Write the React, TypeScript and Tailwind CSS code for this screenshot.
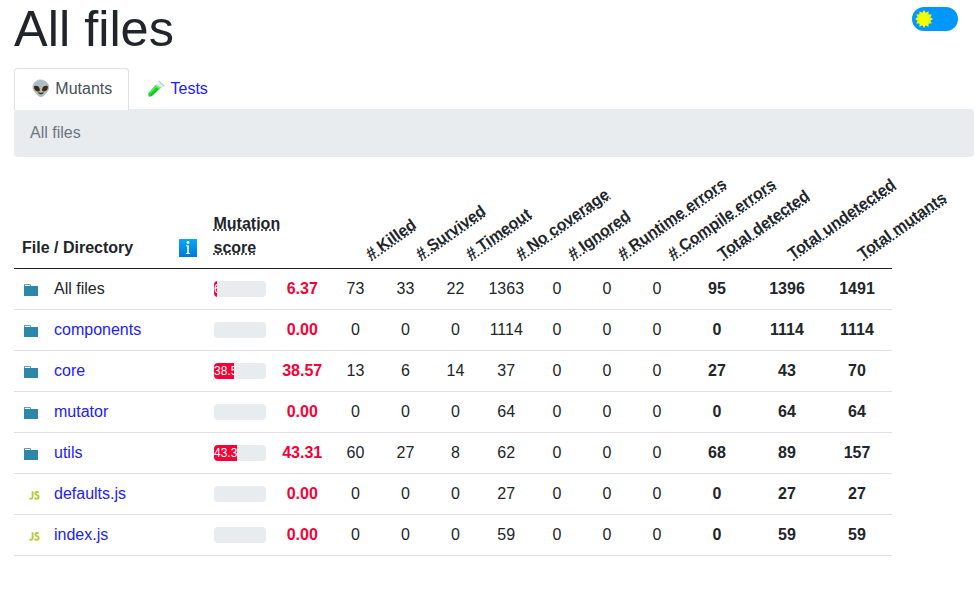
import React from "react";

type Row = { name: string; kind: "root" | "dir" | "js"; score: number; counts: number[]; totals: number[] };

const counts = ["# Killed", "# Survived", "# Timeout", "# No coverage", "# Ignored", "# Runtime errors", "# Compile errors"];
const totals = ["Total detected", "Total undetected", "Total mutants"];

const rows: Row[] = [
  { name: "All files", kind: "root", score: 6.37, counts: [73, 33, 22, 1363, 0, 0, 0], totals: [95, 1396, 1491] },
  { name: "components", kind: "dir", score: 0, counts: [0, 0, 0, 1114, 0, 0, 0], totals: [0, 1114, 1114] },
  { name: "core", kind: "dir", score: 38.57, counts: [13, 6, 14, 37, 0, 0, 0], totals: [27, 43, 70] },
  { name: "mutator", kind: "dir", score: 0, counts: [0, 0, 0, 64, 0, 0, 0], totals: [0, 64, 64] },
  { name: "utils", kind: "dir", score: 43.31, counts: [60, 27, 8, 62, 0, 0, 0], totals: [68, 89, 157] },
  { name: "defaults.js", kind: "js", score: 0, counts: [0, 0, 0, 27, 0, 0, 0], totals: [0, 27, 27] },
  { name: "index.js", kind: "js", score: 0, counts: [0, 0, 0, 59, 0, 0, 0], totals: [0, 59, 59] },
];

const columns = "grid grid-cols-[192px_68px_56.5px_50px_50px_50px_51.5px_50px_50px_50px_70px_70px_70px] w-[878px]";
const dotted = "underline decoration-dotted";

function FolderIcon() {
  return (
    <svg className="ml-[10px] mt-[2px] h-3 w-[14px] shrink-0" viewBox="0 0 14 12">
      <path fill="#2c87a8" fillRule="evenodd" d="M0 .2h6.8V2H14v10H0zM.8 1v1h5.2V1z" />
    </svg>
  );
}

function JsIcon() {
  return (
    <svg className="ml-[15px] mt-[2px] h-[9px] w-[11px] shrink-0" viewBox="0 0 11 9" fill="none" stroke="#b7cc3c" strokeWidth="1.9">
      <path d="M3.6 .3V6.2Q3.6 7.7 2.1 7.7Q1.2 7.7 .4 7.2M9.8 1.5Q9 1 8 1Q6.3 1 6.3 2.4Q6.3 3.5 8 4.1Q9.7 4.7 9.7 6Q9.7 7.7 7.7 7.7Q6.4 7.7 5.5 7.1" />
    </svg>
  );
}

function InfoIcon() {
  return (
    <svg className="mb-[3px] h-[18px] w-[18px]" viewBox="0 0 18 18">
      <defs>
        <linearGradient id="info" x1="0" y1="0" x2="0" y2="1">
          <stop offset="0" stopColor="#03a7fa" />
          <stop offset="1" stopColor="#0479d6" />
        </linearGradient>
      </defs>
      <rect width="18" height="18" rx=".5" fill="url(#info)" />
      <circle cx="9" cy="3.5" r="1.4" fill="#fff" />
      <path d="M7 6.3H9.8V14H11V14.9H7V14H8.2V7.2H7z" fill="#fff" />
    </svg>
  );
}

function TubeIcon() {
  return (
    <svg className="h-[18px] w-[18px]" viewBox="0 0 18 18">
      <path d="M11.5 2L16 6.5L5.6 15.8Q3.6 17.6 1.6 16.3Q.1 14.5 2 12.3z" fill="#dde9ea" />
      <path d="M8.4 5.2L13.8 7.6L5.2 15.8Q3.4 17.2 1.6 16.2Q.4 14.5 2.2 12.2z" fill="#17d929" />
      <path d="M9.2 5.1L13.8 7.6L11.8 8.7Q9.3 7.6 8.4 6z" fill="#76ee61" />
      <path d="M3 12.7L8.5 7" stroke="#92f47c" strokeWidth="1" strokeLinecap="round" />
      <path d="M3.4 15.9L11 8.9" stroke="#0aae25" strokeWidth="1" />
      <path d="M12 1.2L16.8 5.7" stroke="#b4ced2" strokeWidth="1.3" strokeLinecap="round" />
      <path d="M10.8 4.3L12.2 2.9" stroke="#fff" strokeWidth="1" />
    </svg>
  );
}

function Rotated({ label }: { label: string }) {
  return (
    <div className="pb-[9.5px] pl-[7.5px]">
      <div className="w-[30px] translate-x-[27px] rotate-[-35deg] whitespace-nowrap">
        <span className={dotted}>{label}</span>
      </div>
    </div>
  );
}

const sun = Array.from({ length: 24 }, (_, i) => {
  const r = i % 2 ? 6.5 : 9;
  const a = (i * Math.PI) / 12;
  return `${(9 + r * Math.sin(a)).toFixed(2)},${(9 - r * Math.cos(a)).toFixed(2)}`;
}).join(" ");

export default function App() {
  return (
    <div className="h-[594px] overflow-hidden bg-white pl-[14px] font-['Liberation_Sans','Noto_Color_Emoji',sans-serif] text-base leading-6 text-[#212529]">
      <header className="flex h-[68px] justify-between pr-[19px]">
        <h1 className="-mt-[1px] text-[50.5px] leading-[60px]">All files</h1>
        <div className="mt-[7px] flex h-6 w-[46px] items-center rounded-full bg-[#0098ff] pl-[2.5px]">
          <svg className="h-[18px] w-[18px]" viewBox="0 0 18 18">
            <polygon points={sun} fill="#f6ff00" />
          </svg>
        </div>
      </header>
      <nav className="flex h-[41px]">
        <div className="h-[42px] w-[115px] rounded-t-[4px] border border-b-0 border-[#dee2e6] bg-white pl-[16px] pt-[8px] whitespace-nowrap text-[#495057]">👽 Mutants</div>
        <div className="flex gap-[5.5px] whitespace-nowrap pl-[18px] pt-[9px] text-[#2020ff]">
          <span className="pt-[3px]"><TubeIcon /></span>
          <span>Tests</span>
        </div>
      </nav>
      <div className="h-12 w-[960px] rounded-[4px] bg-[#e9ecef] px-4 pt-[12px] text-[#6c757d]">All files</div>

      <div className={`${columns} mt-[11px] h-[101px] items-end border-b border-[#212529] font-bold`}>
        <div className="flex items-end justify-between pb-[8px] pl-2 pr-[9px]">
          <span>File / Directory</span>
          <InfoIcon />
        </div>
        <div className={`pb-[8px] pl-[7.5px] ${dotted}`}>Mutation score</div>
        <div />
        {counts.map((label) => <Rotated key={label} label={label} />)}
        {totals.map((label) => <Rotated key={label} label={label} />)}
      </div>
      {rows.map((row) => (
        <div key={row.name} className={`${columns} h-[41px] items-center border-b border-[#dee2e6] text-center`}>
          <div className="flex items-center">
            <div className="w-10">{row.kind === "js" ? <JsIcon /> : <FolderIcon />}</div>
            <span className={row.kind === "root" ? "" : "text-[#2020ff]"}>{row.name}</span>
          </div>
          <div className="ml-2 mr-2 flex h-4 overflow-hidden rounded-[4px] bg-[#e9ecef] text-left text-xs leading-4 text-white">
            <div className="overflow-hidden bg-[#f70035]" style={{ width: `${row.score}%` }}>{row.score > 0 && row.score.toFixed(2)}</div>
          </div>
          <div className="font-bold text-[#f70035]">{row.score.toFixed(2)}</div>
          {row.counts.map((n, i) => <div key={i}>{n}</div>)}
          {row.totals.map((n, i) => <div key={i} className="font-bold">{n}</div>)}
        </div>
      ))}
    </div>
  );
}
